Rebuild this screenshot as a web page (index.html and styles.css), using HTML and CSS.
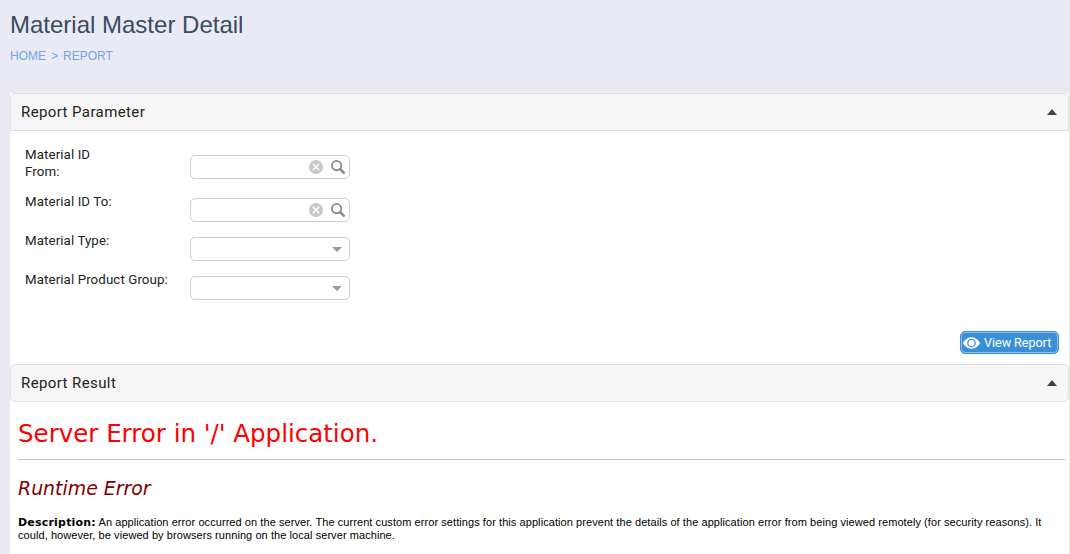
FILE: index.html
```html
<!DOCTYPE html>
<html lang="en">
<head>
<meta charset="utf-8">
<title>Material Master Detail</title>
<link rel="stylesheet" href="styles.css">
</head>
<body>
<div class="page-head">
  <h1 class="page-title">Material Master Detail</h1>
  <div class="crumbs"><span>HOME</span><span class="sep">&gt;</span><span>REPORT</span></div>
</div>
<section class="panel">
  <header class="panel-head">
    <h2>Report Parameter</h2>
    <svg class="caret" width="10" height="6" viewBox="0 0 10 6"><path d="M5 0L10 6H0Z"/></svg>
  </header>
  <div class="panel-body">
    <div class="row row-first">
      <label>Material ID<br>From:</label>
      <div class="field">
        <svg class="clear" width="14" height="14" viewBox="0 0 14 14"><circle cx="7" cy="7" r="7" fill="#c8c8c8"/><path d="M3.800 3.800l6.400 6.400M10.200 3.800l-6.400 6.400" stroke="#fff" stroke-width="1.500"/></svg>
        <svg class="search" width="14" height="14" viewBox="0 0 15 15"><circle cx="6" cy="6" r="5" fill="none" stroke="#8a8a8a" stroke-width="2"/><path d="M9.800 9.800l3.800 3.800" stroke="#8a8a8a" stroke-width="2.800" stroke-linecap="round"/></svg>
      </div>
    </div>
    <div class="row">
      <label>Material ID To:</label>
      <div class="field">
        <svg class="clear" width="14" height="14" viewBox="0 0 14 14"><circle cx="7" cy="7" r="7" fill="#c8c8c8"/><path d="M3.800 3.800l6.400 6.400M10.200 3.800l-6.400 6.400" stroke="#fff" stroke-width="1.500"/></svg>
        <svg class="search" width="14" height="14" viewBox="0 0 15 15"><circle cx="6" cy="6" r="5" fill="none" stroke="#8a8a8a" stroke-width="2"/><path d="M9.800 9.800l3.800 3.800" stroke="#8a8a8a" stroke-width="2.800" stroke-linecap="round"/></svg>
      </div>
    </div>
    <div class="row">
      <label>Material Type:</label>
      <div class="field"><svg class="drop" width="10" height="5" viewBox="0 0 10 5"><path d="M0 0H10L5 5Z"/></svg></div>
    </div>
    <div class="row">
      <label>Material Product Group:</label>
      <div class="field"><svg class="drop" width="10" height="5" viewBox="0 0 10 5"><path d="M0 0H10L5 5Z"/></svg></div>
    </div>
    <div class="actions">
      <button class="btn" type="button">
        <svg width="17" height="12" viewBox="0 0 18 12"><path d="M9 0C5 0 1.800 2.600 0 6c1.800 3.400 5 6 9 6s7.200-2.600 9-6c-1.800-3.400-5-6-9-6zm0 10.600A4.600 4.600 0 1 1 9 1.400a4.600 4.600 0 0 1 0 9.200z" fill="#fff"/><circle cx="9" cy="6" r="3.300" fill="#fff"/></svg>
        <span>View Report</span>
      </button>
    </div>
  </div>
</section>
<section class="panel panel-last">
  <header class="panel-head panel-head-closed">
    <h2>Report Result</h2>
    <svg class="caret" width="10" height="6" viewBox="0 0 10 6"><path d="M5 0L10 6H0Z"/></svg>
  </header>
  <div class="result">
    <h3 class="err-title">Server Error in '/' Application.</h3>
    <hr class="err-rule">
    <h4 class="err-sub">Runtime Error</h4>
    <p class="err-text"><b>Description:</b> An application error occurred on the server. The current custom error settings for this application prevent the details of the application error from being viewed remotely (for security reasons). It could, however, be viewed by browsers running on the local server machine.</p>
  </div>
</section>
</body>
</html>
```
FILE: styles.css
```css
* { box-sizing: border-box; }
html, body { height: 100%; overflow: hidden; }
body {
  margin: 0;
  padding: 0 1px 0 10px;
  background: #e9eaf3;
  font-family: "Liberation Sans", Arial, sans-serif;
  display: flex;
  flex-direction: column;
}
.page-head { height: 93px; flex: none; padding-top: 11px; }
.page-title {
  margin: 0;
  font-size: 24px;
  line-height: 28px;
  font-weight: 400;
  color: #3a4b64;
}
.crumbs {
  margin-top: 9px;
  font-size: 12px;
  line-height: 16px;
  color: #74a3e0;
  display: flex;
  gap: 5px;
}
.panel { background: #fff; flex: none; }
.panel-last { flex: 1; }
.panel-head {
  height: 38px;
  padding: 0 11px 0 10px;
  display: flex;
  align-items: center;
  justify-content: space-between;
  background: #f6f6f6;
  border: 1px solid #dfdfdf;
  border-radius: 5px 5px 0 0;
}
.panel-head-closed { border-radius: 5px; }
.panel-head h2 {
  margin: 0;
  font-family: Roboto, "Noto Sans", sans-serif;
  font-size: 15px;
  font-weight: 400;
  letter-spacing: 0.4px;
  color: #222;
}
.caret { fill: #444; }
.panel-body { height: 233px; padding: 15px 10px 0 15px; }
.row {
  display: flex;
  align-items: flex-start;
  margin-bottom: 10px;
}
.row-first { margin-bottom: 13px; }
.row label {
  width: 165px;
  flex: none;
  font-family: Roboto, sans-serif;
  font-size: 13.300px;
  letter-spacing: 0.1px;
  line-height: 17px;
  color: #222;
}
.field {
  width: 160px;
  height: 24px;
  margin-top: 5px;
  background: #fff;
  border: 1px solid #cfcfcf;
  border-radius: 5px;
  display: flex;
  align-items: center;
  justify-content: flex-end;
  padding-right: 4px;
  gap: 8px;
}
.row-first .field { margin-top: 9px; }
.drop { fill: #9a9a9a; margin-right: 3px; }
.actions { display: flex; justify-content: flex-end; margin-top: 31px; }
.btn {
  width: 99px;
  height: 23px;
  padding: 0 0 0 2px;
  display: flex;
  align-items: center;
  justify-content: flex-start;
  gap: 4px;
  background: #3a90d6;
  border: 1px solid #3a90d6;
  outline: 1px solid #8dc0ea;
  outline-offset: -2px;
  border-radius: 5px;
  color: #fff;
  font-family: Roboto, sans-serif;
  font-size: 12.500px;
}
.result { padding: 0 4px 0 8px; }
.err-title {
  margin: 0;
  padding-top: 17px;
  font-family: "DejaVu Sans", Verdana, sans-serif;
  font-size: 24.500px;
  line-height: 30px;
  font-weight: 400;
  color: #f00;
}
.err-rule {
  margin: 10px 0 0;
  border: 0;
  border-top: 1px solid #c0c0c0;
}
.err-sub {
  margin: 15px 0 0;
  font-family: "DejaVu Sans", Verdana, sans-serif;
  font-size: 18.900px;
  line-height: 26px;
  font-weight: 400;
  font-style: italic;
  color: #800000;
}
.err-text {
  margin: 15px 0 0;
  font-size: 11px;
  line-height: 13px;
  letter-spacing: 0.07px;
  color: #000;
}
.err-text b { font-family: "DejaVu Sans", Verdana, sans-serif; font-size: 11px; letter-spacing: 0.2px; line-height: 13px; }
```
